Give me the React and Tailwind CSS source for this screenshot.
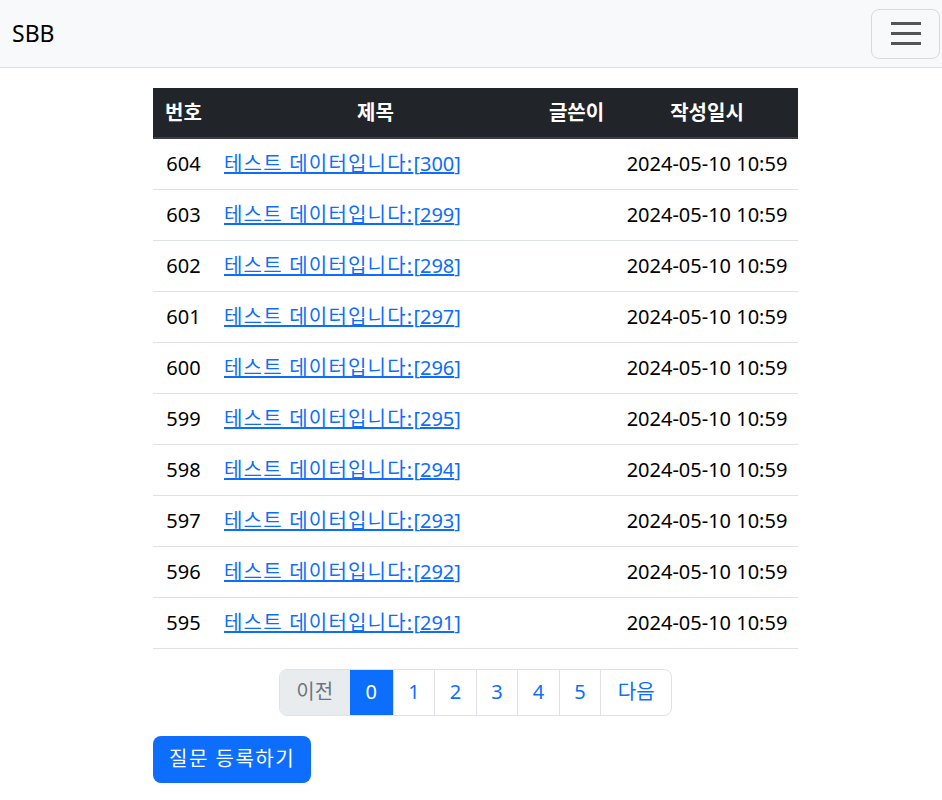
const rows = Array.from({ length: 10 }, (_, i) => ({ no: 604 - i, id: 300 - i }))
const pages = ['0', '1', '2', '3', '4', '5']

export default function App() {
  return (
    <div className="min-h-screen bg-white text-[20px] text-[#212529]" style={{ fontFamily: '"Noto Sans", "Noto Sans CJK KR", sans-serif' }}>
      <nav className="flex h-[68px] items-center justify-between border-b border-[#dee2e6] bg-[#f8f9fa] pl-[12px] pr-[2px]">
        <span className="text-[23px] text-black">SBB</span>
        <button className="flex h-[50px] w-[69px] flex-col items-center justify-center gap-[7px] rounded-[8px] border border-[#d9d9d9]">
          <span className="h-[3px] w-[30px] bg-[#555]" />
          <span className="h-[3px] w-[30px] bg-[#555]" />
          <span className="h-[3px] w-[30px] bg-[#555]" />
        </button>
      </nav>

      <div className="ml-[153px] w-[645px] pt-[20px]">
        <table className="w-full border-collapse">
          <thead>
            <tr className="h-[50px] border-b-2 border-[#3a3d41] bg-[#212529] font-bold text-white">
              <th className="w-[61px] px-[10px] text-center">번호</th>
              <th className="w-[323px] px-[10px] text-center">제목</th>
              <th className="w-[79px] px-[10px] text-center">글쓴이</th>
              <th className="px-[10px] text-center">작성일시</th>
            </tr>
          </thead>
          <tbody>
            {rows.map((r) => (
              <tr key={r.no} className="h-[51px] border-b border-[#dee2e6]">
                <td className="px-[10px] text-center text-black">{r.no}</td>
                <td className="px-[10px]">
                  <a href="#" className="text-[#0d6efd] underline">
                    <span className="tracking-[1.2px]">테스트 데이터입니다:</span>[{r.id}]
                  </a>
                </td>
                <td className="px-[10px]" />
                <td className="px-[10px] text-center text-black">2024-05-10 10:59</td>
              </tr>
            ))}
          </tbody>
        </table>

        <div className="mt-[20px] flex justify-center">
          <div className="flex h-[47px] overflow-hidden rounded-[8px] border border-[#dee2e6]">
            <span className="flex w-[70px] items-center justify-center bg-[#e9ecef] text-[#6c757d]">이전</span>
            {pages.map((p, i) => (
              <span
                key={p}
                className={i === 0
                  ? 'flex w-[43px] items-center justify-center bg-[#0d6efd] text-white'
                  : 'flex w-[41.5px] items-center justify-center border-l border-[#dee2e6] text-[#0d6efd]'}
              >
                {p}
              </span>
            ))}
            <span className="flex w-[71px] items-center justify-center border-l border-[#dee2e6] text-[#0d6efd]">다음</span>
          </div>
        </div>

        <button className="mt-[20px] h-[47px] rounded-[8px] bg-[#0d6efd] px-[16px] tracking-[1.5px] text-white">질문 등록하기</button>
      </div>
    </div>
  )
}
